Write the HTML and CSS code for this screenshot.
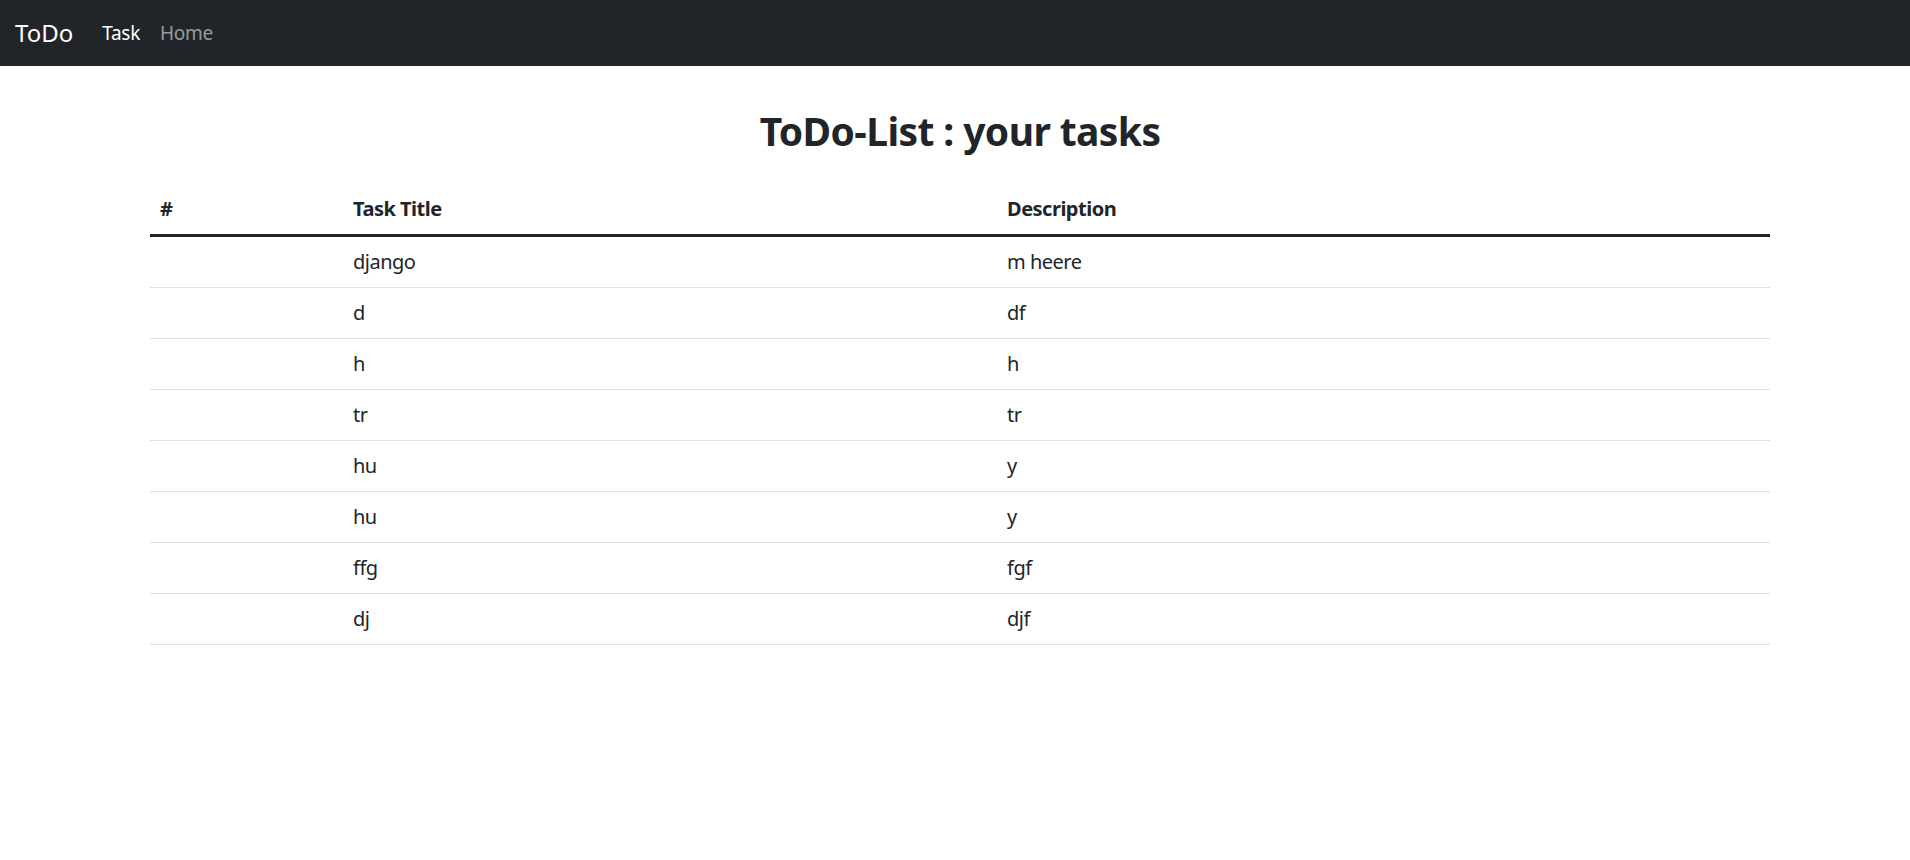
FILE: index.html
```html
<!DOCTYPE html>
<html lang="en">
<head>
<meta charset="utf-8">
<title>ToDo</title>
<link rel="stylesheet" href="styles.css">
</head>
<body>
<nav class="navbar">
  <a class="brand" href="#">ToDo</a>
  <ul class="nav-links">
    <li><a class="nav-link active" href="#">Task</a></li>
    <li><a class="nav-link" href="#">Home</a></li>
  </ul>
</nav>
<main class="container">
  <h2 class="page-title">ToDo-List : your tasks</h2>
  <table class="task-table">
    <colgroup>
      <col class="col-num">
      <col class="col-title">
      <col class="col-desc">
    </colgroup>
    <thead>
      <tr><th>#</th><th>Task Title</th><th>Description</th></tr>
    </thead>
    <tbody>
      <tr><td></td><td>django</td><td>m heere</td></tr>
      <tr><td></td><td>d</td><td>df</td></tr>
      <tr><td></td><td>h</td><td>h</td></tr>
      <tr><td></td><td>tr</td><td>tr</td></tr>
      <tr><td></td><td>hu</td><td>y</td></tr>
      <tr><td></td><td>hu</td><td>y</td></tr>
      <tr><td></td><td>ffg</td><td>fgf</td></tr>
      <tr><td></td><td>dj</td><td>djf</td></tr>
    </tbody>
  </table>
</main>
</body>
</html>
```
FILE: styles.css
```css
* { box-sizing: border-box; }
html, body { margin: 0; padding: 0; }
body {
  font-family: "Noto Sans", "Open Sans", sans-serif;
  font-size: 20px;
  line-height: 1.5;
  color: #212529;
  background: #fff;
}
.navbar {
  height: 66px;
  background: #212529;
  display: flex;
  align-items: center;
  padding: 0 15px;
}
.brand {
  color: #fff;
  text-decoration: none;
  font-size: 24px;
  margin-right: 19px;
  line-height: 1;
}
.nav-links {
  list-style: none;
  margin: 0;
  padding: 0;
  display: flex;
}
.nav-link {
  display: block;
  padding: 0 10px;
  color: rgba(255,255,255,.55);
  text-decoration: none;
  font-size: 19px;
  letter-spacing: -0.3px;
}
.nav-link.active { color: #fff; }
.container {
  width: 1620px;
  margin-left: 150px;
  padding-top: 42px;
}
.page-title {
  margin: 0 0 29px;
  text-align: center;
  font-size: 39px;
  line-height: 1.2;
  font-weight: 700;
  letter-spacing: -0.6px;
}
.task-table {
  width: 100%;
  border-collapse: collapse;
  table-layout: fixed;
}
.col-num { width: 193px; }
.col-title { width: 654px; }
.task-table th,
.task-table td {
  text-align: left;
  padding: 10px 10px;
  line-height: 30px;
  vertical-align: top;
  letter-spacing: -0.5px;
}
.task-table th {
  font-weight: 700;
  border-bottom: 3px solid #212529;
}
.task-table td {
  border-bottom: 1px solid #dee2e6;
}
```
